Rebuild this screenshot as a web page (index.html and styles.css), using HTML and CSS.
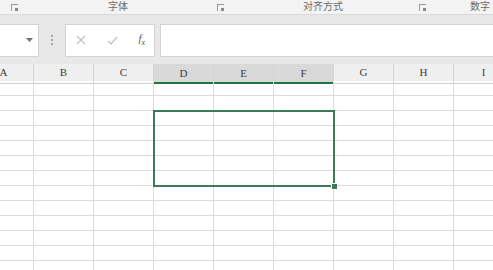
FILE: index.html
```html
<!DOCTYPE html>
<html lang="zh-CN">
<head>
    <meta charset="UTF-8">
    <title>工作表</title>
    <link rel="stylesheet" href="styles.css">
</head>
<body>
    <div class="ribbon">
        <div class="group g1"><span class="label"></span><span class="launcher"></span></div>
        <div class="group g2"><span class="label">字体</span><span class="launcher"></span></div>
        <div class="group g3"><span class="label">对齐方式</span><span class="launcher"></span></div>
        <div class="group g4"><span class="label">数字</span></div>
    </div>

    <div class="formula-bar">
        <div class="name-box">
            <svg class="arrow" width="7" height="4" viewBox="0 0 7 4"><path d="M0 0h7L3.5 4z" fill="#707070"/></svg>
        </div>
        <div class="grip"><i></i><i></i><i></i></div>
        <div class="buttons">
            <svg width="10" height="10" viewBox="0 0 10 10"><path d="M1 1l8 8M9 1l-8 8" stroke="#c4c4c4" stroke-width="1.3"/></svg>
            <svg width="11" height="9" viewBox="0 0 11 9"><path d="M1 5l3 3 6-7" stroke="#c4c4c4" stroke-width="1.3" fill="none"/></svg>
            <span class="fx">f<sub>x</sub></span>
        </div>
        <div class="formula-input"></div>
    </div>

    <div class="sheet-wrap">
        <div class="sheet">
            <div class="headers">
                <div class="col-head">A</div>
                <div class="col-head">B</div>
                <div class="col-head">C</div>
                <div class="col-head sel">D</div>
                <div class="col-head sel">E</div>
                <div class="col-head sel">F</div>
                <div class="col-head">G</div>
                <div class="col-head">H</div>
                <div class="col-head">I</div>
            </div>
            <div class="grid" id="grid"></div>
            <div class="selection"><span class="handle"></span></div>
        </div>
    </div>

    <script>
        const grid = document.getElementById('grid');
        for (let i = 0; i < 9 * 13; i++) {
            const cell = document.createElement('div');
            cell.className = 'cell';
            grid.appendChild(cell);
        }
    </script>
</body>
</html>
```

FILE: styles.css
```css
body {
    margin: 0;
    width: 493px;
    height: 270px;
    overflow: hidden;
    background: #fff;
    font-family: "Liberation Sans", "Noto Sans CJK SC", sans-serif;
}
.ribbon {
    display: flex;
    height: 14px;
    overflow: hidden;
    background: #f3f3f3;
    border-bottom: 1px solid #dadada;
}
.group {
    display: grid;
    grid-template-columns: 1fr auto;
    align-items: center;
    flex: none;
}
.g1 { width: 25px; }
.g2 { width: 206px; }
.g3 { width: 202px; }
.g4 { width: 100px; }
.label {
    text-align: center;
    font-size: 10px;
    color: #6a6a6a;
    line-height: 14px;
}
.g2 .label { padding-right: 6px; }
.g3 .label { padding-right: 4px; }
.g4 .label { padding-right: 6px; }
.launcher {
    width: 6px;
    height: 6px;
    margin-right: 7px;
    border-left: 1px solid #9a9a9a;
    border-top: 1px solid #9a9a9a;
    position: relative;
}
.launcher::after {
    content: "";
    position: absolute;
    right: 0;
    bottom: 0;
    width: 3px;
    height: 3px;
    background: #8a8a8a;
}
.formula-bar {
    display: flex;
    align-items: center;
    height: 48px;
    padding-top: 1px;
    background: #e8e8e8;
}
.name-box {
    width: 38px;
    height: 31px;
    background: #fff;
    border: 1px solid #d2d2d2;
    border-left: none;
    display: flex;
    align-items: center;
    justify-content: flex-end;
}
.arrow { margin-right: 5px; }
.grip {
    width: 26px;
    display: flex;
    flex-direction: column;
    align-items: center;
    gap: 2px;
}
.grip i {
    width: 2px;
    height: 2px;
    background: #a8a8a8;
}
.buttons {
    width: 90px;
    height: 33px;
    box-sizing: border-box;
    background: #fff;
    border: 1px solid #d2d2d2;
    display: flex;
    align-items: center;
    justify-content: space-between;
    padding: 0 9px 0 10px;
}
.fx {
    font-family: "Liberation Serif", serif;
    font-style: italic;
    font-size: 11px;
    color: #555;
}
.fx sub {
    font-size: 8px;
}
.formula-input {
    flex: 1;
    margin-left: 5px;
    height: 31px;
    background: #fff;
    border: 1px solid #d2d2d2;
    border-right: none;
}
.sheet-wrap {
    overflow: hidden;
    width: 493px;
}
.sheet {
    position: relative;
    margin-left: -26px;
    width: 540px;
}
.headers {
    display: grid;
    grid-template-columns: repeat(9, 60px);
    background: #efefef;
    height: 17px;
}
.col-head {
    border-right: 1px solid #d4d4d4;
    border-bottom: 1px solid #cfcfcf;
    font-family: "Liberation Serif", serif;
    font-size: 11px;
    color: #404040;
    text-align: center;
    line-height: 17px;
}
.col-head.sel {
    background: #d9d9d9;
    border-bottom: 2px solid #217346;
    line-height: 18px;
}
.grid {
    display: grid;
    grid-template-columns: repeat(9, 60px);
    grid-auto-rows: 15px;
}
.cell {
    border-right: 1px solid #dcdcdc;
    border-bottom: 1px solid #dcdcdc;
}
.selection {
    position: absolute;
    left: 179px;
    top: 46px;
    width: 178px;
    height: 73px;
    border: 2px solid #3d7a58;
}
.handle {
    position: absolute;
    right: -5px;
    bottom: -5px;
    width: 5px;
    height: 5px;
    background: #3d7a58;
    border: 1px solid #fff;
}
```
